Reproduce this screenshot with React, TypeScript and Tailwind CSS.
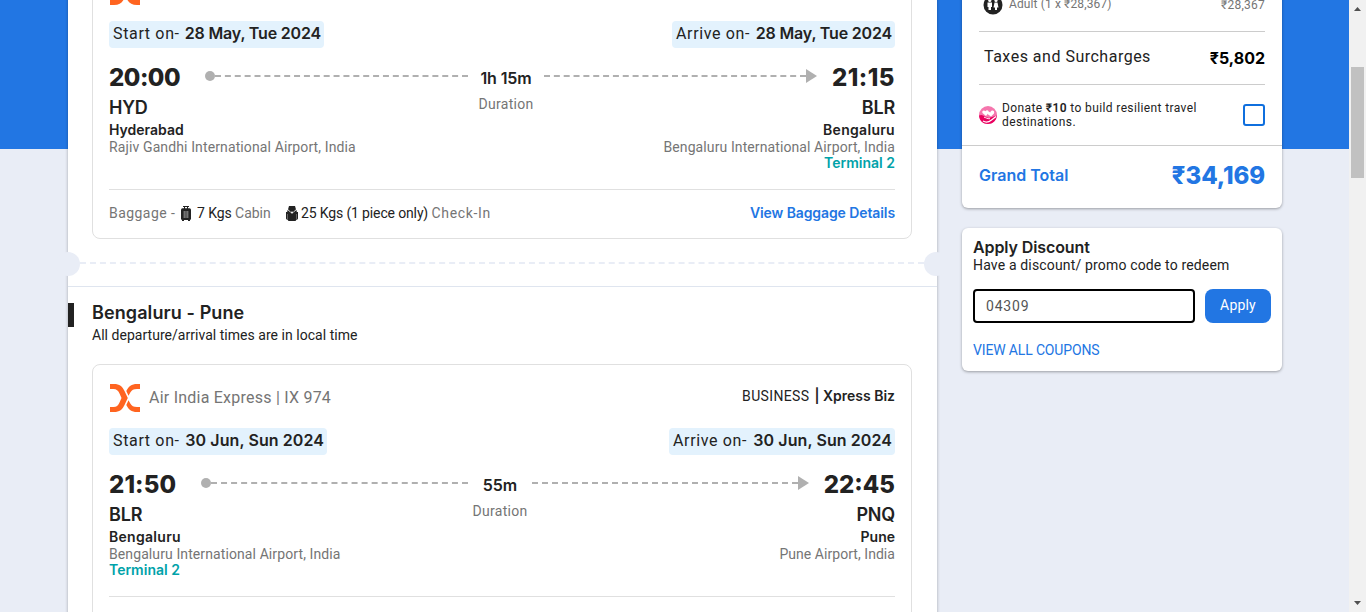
import React from "react";

type Stop = {
  time: string;
  timeClass: string;
  code: string;
  city: string;
  cityClass: string;
  airport: string;
  airportClass: string;
  terminal?: string;
  dateLabel: string;
  date: string;
  dateClass: string;
  chipClass: string;
};

type Flight = {
  number: string;
  duration: string;
  durationClass: string;
  from: Stop;
  to: Stop;
};

const flights: Flight[] = [
  {
    number: "IX 974",
    duration: "1h 15m",
    durationClass: "w-[76px] tracking-[-0.1px]",
    from: {
      time: "20:00",
      timeClass: "w-[71px] tracking-[-0.5px]",
      code: "HYD",
      city: "Hyderabad",
      cityClass: "",
      airport: "Rajiv Gandhi International Airport, India",
      airportClass: "tracking-[0.12px]",
      dateLabel: "Start on-",
      date: "28 May, Tue 2024",
      dateClass: "tracking-[-0.18px]",
      chipClass: "w-[215px]",
    },
    to: {
      time: "21:15",
      timeClass: "w-[63px] tracking-[0.5px]",
      code: "BLR",
      city: "Bengaluru",
      cityClass: "tracking-[0.3px]",
      airport: "Bengaluru International Airport, India",
      airportClass: "tracking-[0.1px]",
      terminal: "Terminal 2",
      dateLabel: "Arrive on-",
      date: "28 May, Tue 2024",
      dateClass: "tracking-[-0.18px]",
      chipClass: "w-[223px]",
    },
  },
  {
    number: "IX 974",
    duration: "55m",
    durationClass: "w-[64px]",
    from: {
      time: "21:50",
      timeClass: "w-[67px] tracking-[0.1px]",
      code: "BLR",
      city: "Bengaluru",
      cityClass: "tracking-[0.3px]",
      airport: "Bengaluru International Airport, India",
      airportClass: "tracking-[0.1px]",
      terminal: "Terminal 2",
      dateLabel: "Start on-",
      date: "30 Jun, Sun 2024",
      dateClass: "tracking-[0.08px]",
      chipClass: "w-[218px]",
    },
    to: {
      time: "22:45",
      timeClass: "w-[71px]",
      code: "PNQ",
      city: "Pune",
      cityClass: "",
      airport: "Pune Airport, India",
      airportClass: "tracking-[0.05px]",
      dateLabel: "Arrive on-",
      date: "30 Jun, Sun 2024",
      dateClass: "tracking-[0.08px]",
      chipClass: "w-[226px]",
    },
  },
];

function AirlineLogo() {
  return (
    <svg width="30" height="28" viewBox="0 0 30 28" className="ml-px shrink-0">
      <path d="M0 0H4C9.500 0 12.500 2.500 14.500 7L17.800 14L14.500 21C12.500 25.500 9.500 28 4 28H0V23H3.500C6.500 23 8.200 21.500 9.500 18.500L11.500 14L9.500 9.500C8.200 6.500 6.500 5 3.500 5H0Z" fill="#ff6420" />
      <path d="M30 0H27C21.500 0 18.500 2.500 16.300 7L18.500 11.800L20.300 8.500C21.700 6 23.500 5 27 5H30Z" fill="#ff6420" />
      <path d="M30 28H27C21.500 28 18.500 25.500 16.300 21L18.500 16.200L20.300 19.500C21.700 22 23.500 23 27 23H30Z" fill="#ff6420" />
    </svg>
  );
}

function SuitcaseIcon() {
  return (
    <svg width="10" height="15" viewBox="0 0 10 15" className="shrink-0">
      <path d="M2 0H8V1H7V3H3V1H2Z" fill="#222" />
      <path d="M4 1H6V3H4Z" fill="#fff" />
      <rect y="2.300" width="10" height="11.700" rx="1.500" fill="#222" />
      <path d="M3.200 5V12M5 5V12M6.800 5V12" stroke="#999" strokeWidth="1" />
      <path d="M1 14H3V15H1ZM7 14H9V15H7Z" fill="#222" />
    </svg>
  );
}

function BackpackIcon() {
  return (
    <svg width="12" height="15" viewBox="0 0 12 15" className="shrink-0">
      <path d="M3 0H9L10 3.500L7.500 6H4.500L2 3.500Z" fill="#222" />
      <path d="M1.500 4L4.500 6H7.500L10.500 4L11 7V13L9.500 15H2.500L1 13V7Z" fill="#222" />
      <path d="M2.200 3.900L5.200 6.800M9.800 3.900L6.800 6.800" stroke="#eee" strokeWidth="0.600" />
      <circle cx="6" cy="6.500" r="1" fill="#fff" />
      <path d="M0 6H1.500V13.500H0.500L0 12.500ZM12 6H10.500V13.500H11.500L12 12.500Z" fill="#222" />
      <path d="M1.500 8V13M10.500 8V13" stroke="#aaa" strokeWidth="0.500" />
    </svg>
  );
}

function DateChip({ stop }: { stop: Stop }) {
  return (
    <div className={`flex h-[27px] items-center justify-between whitespace-nowrap rounded bg-[#e3f2fd] pb-[2px] pl-1 pr-[3px] text-[16px] leading-[20px] ${stop.chipClass}`}>
      <span className="tracking-[0.65px]">{stop.dateLabel}</span>
      <span className={`pb-px font-[Inter,sans-serif] font-semibold ${stop.dateClass}`}>{stop.date}</span>
    </div>
  );
}

function StopDetails({ stop, end = false }: { stop: Stop; end?: boolean }) {
  return (
    <div className={`flex flex-col ${end ? "items-end" : "items-start"}`}>
      <div className="mt-[5px] font-[Inter,sans-serif] text-[18px] font-semibold leading-6 tracking-[-0.2px]">{stop.code}</div>
      <div className={`mt-[2px] font-[Inter,sans-serif] text-[14px] font-semibold leading-4 ${stop.cityClass}`}>{stop.city}</div>
      <div className={`mt-px text-[14px] leading-4 text-[#757575] ${stop.airportClass}`}>{stop.airport}</div>
      <div className="h-4 font-[Inter,sans-serif] text-[14px] font-semibold leading-4 text-[#00a2a9]">{stop.terminal}</div>
    </div>
  );
}

function FlightCard({ flight }: { flight: Flight }) {
  const { from, to } = flight;
  return (
    <section className="ml-6 h-[282px] w-[820px] rounded-lg border border-[#e0e0e0] px-4 pt-[19px]">
      <div className="flex h-7 items-center justify-between">
        <div className="flex items-center gap-[9px]">
          <AirlineLogo />
          <span className="text-[16px] leading-5 tracking-[0.23px] text-[#757575]">Air India Express | {flight.number}</span>
        </div>
        <div className="flex gap-[5px] pb-1 text-[14px] leading-5">
          <span className="tracking-[0.35px]">BUSINESS</span>
          <span className="font-[Inter,sans-serif] font-semibold">| Xpress Biz</span>
        </div>
      </div>
      <div className="mt-4 flex justify-between">
        <DateChip stop={from} />
        <DateChip stop={to} />
      </div>
      <div className="mt-[15px] flex h-7 items-start">
        <div className={`pt-px font-[Inter,sans-serif] text-[24px] font-extrabold leading-7 ${from.timeClass}`}>{from.time}</div>
        <div className="flex flex-1 flex-col items-center">
          <div className="grid h-7 w-full grid-cols-[1fr_auto_1fr] items-start">
            <div className="flex items-center pl-[25px] pt-2">
              <span className="size-[10px] rounded-full bg-[#b0b0b0]" />
              <span className="flex-1 border-t-2 border-dashed border-[#b0b0b0]" />
            </div>
            <div className={`whitespace-nowrap pt-[5px] text-center font-[Inter,sans-serif] text-[16px] font-semibold leading-5 ${flight.durationClass}`}>{flight.duration}</div>
            <div className="flex items-center pr-[15px] pt-[6px]">
              <span className="flex-1 border-t-2 border-dashed border-[#b0b0b0]" />
              <span className="h-[14px] w-[11px] bg-[#b0b0b0] [clip-path:polygon(0_0,100%_50%,0_100%)]" />
            </div>
          </div>
          <div className="mt-[5px] text-[14px] leading-4 tracking-[0.3px] text-[#757575]">Duration</div>
        </div>
        <div className={`flex justify-end pt-px font-[Inter,sans-serif] text-[24px] font-extrabold leading-7 ${to.timeClass}`}>{to.time}</div>
      </div>
      <div className="flex justify-between">
        <StopDetails stop={from} />
        <StopDetails stop={to} end />
      </div>
      <div className="mt-[18px] flex h-12 items-center justify-between border-t border-[#e0e0e0] pb-px text-[14px] leading-4">
        <div className="flex items-center text-[#757575]">
          <span className="w-[72px] tracking-[0.45px]">Baggage -</span>
          <SuitcaseIcon />
          <span className="w-[95px] pl-[6px]"><span className="tracking-[-0.1px] text-[#222]">7 Kgs</span> <span>Cabin</span></span>
          <BackpackIcon />
          <span className="pl-[3px]"><span className="tracking-[-0.14px] text-[#222]">25 Kgs (1 piece only)</span> <span className="tracking-[0.65px]">Check-In</span></span>
        </div>
        <a className="font-[Inter,sans-serif] font-semibold tracking-[-0.1px] text-[#2276e3]">View Baggage Details</a>
      </div>
    </section>
  );
}

function TearLine() {
  return (
    <div className="flex h-12 items-start overflow-visible border-b border-[#dfe5ef] pt-[13px]">
      <span className="-ml-3 size-6 shrink-0 rounded-full bg-[#e9edf6]" />
      <span className="mt-[10px] flex-1 border-t-2 border-dashed border-[#e9edf6]" />
      <span className="-mr-[11px] size-6 shrink-0 rounded-full bg-[#e9edf6]" />
    </div>
  );
}

function Itinerary() {
  return (
    <main className="-mt-[43px] ml-[68px] h-[700px] w-[869px] shrink-0 bg-white shadow-[0_0_3px_rgba(0,0,0,0.3)]">
      <FlightCard flight={flights[0]} />
      <TearLine />
      <div className="mt-4 flex h-[61px] items-start">
        <span className="mr-[18px] h-6 w-[6px] bg-[#222]" />
        <div>
          <h2 className="font-[Inter,sans-serif] text-[18px] font-semibold leading-5 tracking-[0.1px]">Bengaluru - Pune</h2>
          <p className="mt-1 text-[14px] leading-4 tracking-[0.03px]">All departure/arrival times are in local time</p>
        </div>
      </div>
      <FlightCard flight={flights[1]} />
    </main>
  );
}

function AdultIcon() {
  return (
    <svg width="20" height="20" viewBox="0 0 20 20">
      <circle cx="10" cy="10" r="9.500" fill="#222" />
      <circle cx="6.800" cy="5.500" r="1.600" fill="#fff" />
      <circle cx="13" cy="5.500" r="1.600" fill="#fff" />
      <path d="M4.500 7.500H9V12H8V15H5.500V12H4.500ZM11.500 7.500H14.500L15.500 12.500H14V15H12V12.500H10.500Z" fill="#fff" />
    </svg>
  );
}

function CharityIcon() {
  return (
    <svg width="18" height="18" viewBox="0 0 18 18" className="shrink-0">
      <circle cx="9" cy="9" r="9" fill="#f576ad" />
      <path d="M0 9.500C2 8.500 4 8.800 6 10.500L10 12L17.800 9.500C17.500 15 13.500 18 9 18C4 18 0.300 14.500 0 9.500Z" fill="#e9005f" />
      <path d="M7 10L3.500 7C2.500 5 4.800 3.400 6.400 5.200C7.800 3 10.500 4.500 9.500 6.800Z" fill="#fff" />
      <path d="M12 10.500L8.500 8C7.700 6 9.800 5 11.200 6.400C12.500 3.200 16.200 4.500 15 7.500Z" fill="#fff" />
      <path d="M4 15C6.500 16.500 10 16 12.500 14L17 10.500" fill="none" stroke="#fff" strokeWidth="1.200" />
      <path d="M5 11.200C7 11.500 8 13 11 12.700" fill="none" stroke="#fff" strokeWidth="0.900" />
    </svg>
  );
}

function Fare() {
  return (
    <section className="-mt-[10px] h-[218px] rounded-md bg-white shadow-[0_1px_3px_rgba(0,0,0,0.35)]">
      <div className="px-[17px]">
        <div className="flex h-[41px] items-start justify-between text-[12px] leading-4 text-[#757575]">
          <div className="flex items-start gap-[6px] pl-1 pt-[5px]">
            <AdultIcon />
            <span className="pt-px tracking-[0.12px]">Adult (1 x ₹28,367)</span>
          </div>
          <span className="pt-[7px] tracking-[0.25px]">₹28,367</span>
        </div>
        <div className="flex h-[54px] items-center justify-between border-y border-[#ccc] pl-[5px] text-[16px] leading-5">
          <span className="pb-[2px] tracking-[0.5px]">Taxes and Surcharges</span>
          <span className="font-[Inter,sans-serif] font-bold text-black">₹5,802</span>
        </div>
        <div className="flex h-[60px] items-center">
          <CharityIcon />
          <p className="w-[210px] pb-px pl-[5px] text-[12px] leading-[14px] tracking-[0.38px]">
            Donate <b className="font-semibold">₹10</b> to build resilient travel destinations.
          </p>
          <span className="ml-auto size-[22px] rounded-[3px] border-2 border-[#0f6fde]" />
        </div>
      </div>
      <div className="flex h-[62px] items-center justify-between border-t border-[#ccc] px-[17px] pb-[2px] font-[Inter,sans-serif] text-[#2276e3]">
        <span className="pb-px text-[16px] font-semibold">Grand Total</span>
        <span className="pt-px text-[24px] font-extrabold tracking-[-0.1px]">₹34,169</span>
      </div>
    </section>
  );
}

function Discount() {
  return (
    <section className="mt-5 h-[143px] rounded-md bg-white px-[11px] pt-[10px] shadow-[0_1px_3px_rgba(0,0,0,0.35)]">
      <h3 className="font-[Inter,sans-serif] text-[16px] font-semibold leading-[19px] tracking-[-0.1px]">Apply Discount</h3>
      <p className="text-[14px] leading-4 tracking-[0.16px]">Have a discount/ promo code to redeem</p>
      <div className="mt-4 flex gap-[10px]">
        <div className="flex h-[34px] w-[222px] items-center rounded border-2 border-black px-[11px] text-[14px] tracking-[0.8px] text-[#555]">04309</div>
        <button className="h-[34px] w-[66px] rounded-lg bg-[#2276e3] pb-px text-[14px] tracking-[0.2px] text-white">Apply</button>
      </div>
      <a className="mt-[19px] block text-[14px] leading-4 tracking-[-0.15px] text-[#2276e3]">VIEW ALL COUPONS</a>
    </section>
  );
}

function Scrollbar() {
  return (
    <div className="flex w-[17px] shrink-0 flex-col items-center bg-[#f1f1f1]">
      <span className="mt-[7px] h-1 w-[7px] bg-[#505050] [clip-path:polygon(50%_0,100%_100%,0_100%)]" />
      <span className="mt-14 h-[111px] w-[13px] bg-[#c1c1c1]" />
      <span className="mb-[7px] mt-auto h-1 w-[7px] bg-[#505050] [clip-path:polygon(0_0,100%_0,50%_100%)]" />
    </div>
  );
}

export default function App() {
  return (
    <div className="flex h-[612px] w-[1366px] overflow-hidden font-[Roboto,sans-serif] text-[#222]">
      <div className="flex flex-1 overflow-hidden bg-[linear-gradient(#2276e3_149px,#e9edf6_149px)]">
        <Itinerary />
        <aside className="ml-[25px] w-[320px] shrink-0">
          <Fare />
          <Discount />
        </aside>
      </div>
      <Scrollbar />
    </div>
  );
}
